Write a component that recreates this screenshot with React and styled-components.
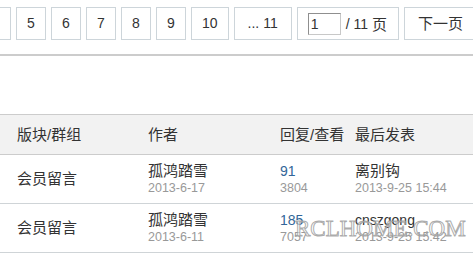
import React from "react";
import styled, { createGlobalStyle } from "styled-components";

const GlobalStyle = createGlobalStyle`
	html, body {
		margin: 0;
		padding: 0;
		background: #fff;
	}
	body {
		font-family: "Liberation Sans", "Noto Sans CJK SC", sans-serif;
		color: #333;
		overflow: hidden;
	}
`;

const pages = ["5", "6", "7", "8", "9", "10"];

const threads = [
	{ forum: "会员留言", author: "孤鸿踏雪", date: "2013-6-17", replies: 91, views: 3804, last: "离别钩", lastCn: true, lastDate: "2013-9-25 15:44" },
	{ forum: "会员留言", author: "孤鸿踏雪", date: "2013-6-11", replies: 185, views: 7057, last: "cnszgong", lastCn: false, lastDate: "2013-9-25 15:42" },
];

const App = () => {
	return (
		<Page>
			<GlobalStyle />
			<PagerBar>
				<Pager>
					<PageLink aria-hidden="true" />
					{pages.map((p) => (
						<PageLink key={p}>{p}</PageLink>
					))}
					<PageLink pad={13}>... 11</PageLink>
					<PageJump>
						<JumpInput defaultValue="1" />
						<span>/ 11 </span>
						<Cn>页</Cn>
					</PageJump>
					<PageLink pad={13}>
						<Cn>下一页</Cn>
					</PageLink>
				</Pager>
			</PagerBar>

			<Table>
				<HeadRow>
					<HeadCell first>版块/群组</HeadCell>
					<HeadCell>作者</HeadCell>
					<HeadCell>回复/查看</HeadCell>
					<HeadCell>最后发表</HeadCell>
				</HeadRow>
				{threads.map((t, i) => (
					<Row key={i}>
						<Cell first>
							<Forum>{t.forum}</Forum>
						</Cell>
						<Cell>
							<Name cn>{t.author}</Name>
							<Sub>{t.date}</Sub>
						</Cell>
						<Cell>
							<Count>{t.replies}</Count>
							<Sub>{t.views}</Sub>
						</Cell>
						<Cell>
							<Name cn={t.lastCn}>{t.last}</Name>
							<Sub>{t.lastDate}</Sub>
						</Cell>
					</Row>
				))}
			</Table>

			<Watermark>RCLHOME.COM</Watermark>
		</Page>
	);
};

export default App;

const Page = styled.div`
	position: relative;
	width: 473px;
	height: 256px;
	overflow: hidden;
`;

const PagerBar = styled.div`
	padding: 7px 0 14px;
	border-bottom: 2px solid #cccccc;
`;

const Pager = styled.div`
	display: flex;
	gap: 5px;
	margin-left: -19px;
	white-space: nowrap;
`;

const PageLink = styled.div`
	flex: none;
	box-sizing: border-box;
	height: 33px;
	line-height: 31px;
	padding: 0 ${({ pad }) => pad || 10}px;
	min-width: 30px;
	text-align: center;
	border: 1px solid #cdd5da;
	font-size: 14px;
	color: #333;
	background: #fff;
`;

const PageJump = styled.div`
	flex: none;
	display: flex;
	align-items: center;
	gap: 4px;
	box-sizing: border-box;
	height: 33px;
	padding: 0 11px 0 10px;
	border: 1px solid #cdd5da;
	font-size: 14px;
	color: #333;
`;

const JumpInput = styled.input`
	box-sizing: border-box;
	width: 33px;
	height: 22px;
	margin: 0 1px 0 0;
	padding: 0 2px;
	border: 1px solid #c8c8c8;
	border-top-color: #8f8f8f;
	border-left-color: #8f8f8f;
	font-family: "Liberation Sans", sans-serif;
	font-size: 14px;
	color: #333;
	outline: none;
`;

const Cn = styled.span`
	font-size: 15px;
`;

const Table = styled.div`
	margin-top: 58px;
	border-top: 1px solid #cccccc;
`;

const Columns = styled.div`
	display: grid;
	grid-template-columns: 148px 132px 75px 1fr;
	border-bottom: 1px solid #cfd4d7;
`;

const HeadRow = styled(Columns)`
	height: 39px;
	align-items: center;
	background: #f2f2f2;
	border-bottom-color: #cccccc;
`;

const HeadCell = styled.div`
	padding-left: ${({ first }) => (first ? "17px" : "0")};
	font-size: 15px;
	line-height: 20px;
	color: #333;
	white-space: nowrap;
`;

const Row = styled(Columns)`
	height: 48px;
	align-items: center;
`;

const Cell = styled.div`
	padding-left: ${({ first }) => (first ? "17px" : "0")};
	display: flex;
	flex-direction: column;
	white-space: nowrap;
`;

const Forum = styled.div`
	font-size: 15px;
	line-height: 20px;
	color: #333;
`;

const Name = styled.div`
	font-size: ${({ cn }) => (cn ? "15px" : "14px")};
	line-height: 18px;
	color: #333;
`;

const Count = styled.div`
	font-size: 14px;
	line-height: 18px;
	color: #336699;
`;

const Sub = styled.div`
	font-size: 12.5px;
	line-height: 16px;
	color: #999;
`;

const Watermark = styled.div`
	position: absolute;
	left: 295px;
	top: 217px;
	font-family: "Liberation Serif", serif;
	font-size: 23px;
	line-height: 23px;
	color: rgba(255, 255, 255, 0.6);
	-webkit-text-stroke: 1px rgba(150, 150, 150, 0.8);
	pointer-events: none;
`;
